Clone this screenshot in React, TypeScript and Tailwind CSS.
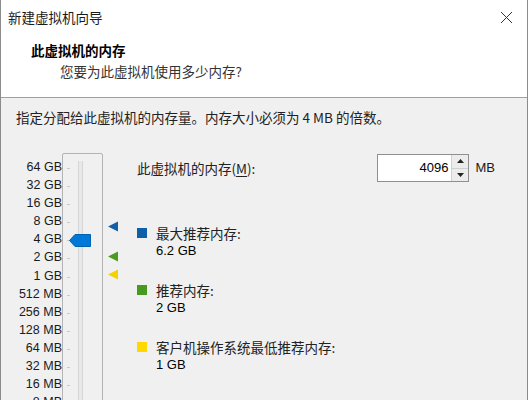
import React from "react";

const cjk = { fontFamily: '"Noto Sans CJK SC", "Liberation Sans", sans-serif' };
const latin = { fontFamily: '"Liberation Sans", "Noto Sans CJK SC", sans-serif' };

const scale = [
  "64 GB", "32 GB", "16 GB", "8 GB", "4 GB", "2 GB", "1 GB",
  "512 MB", "256 MB", "128 MB", "64 MB", "32 MB", "16 MB", "8 MB",
];

function Marker({ color }: { color: string }) {
  return (
    <svg width="11" height="11" viewBox="0 0 11 11">
      <polygon points="0,5.5 10,0.5 10,10.5" fill={color} />
    </svg>
  );
}

function Legend({ color, label, value }: { color: string; label: string; value: string }) {
  return (
    <div className="flex gap-[9px]">
      <div className={`mt-[4px] h-[10px] w-[10px] ${color}`} />
      <div className="flex flex-col">
        <span className="text-[13.5px] leading-[18px] text-[#222]" style={cjk}>{label}</span>
        <span className="text-[13px] leading-[18px] text-black" style={latin}>{value}</span>
      </div>
    </div>
  );
}

export default function App() {
  return (
    <div className="h-[400px] w-[529px] overflow-hidden bg-white">
      <div className="flex h-[400px] w-[528px] flex-col border-x border-[#8c8c8c]">
        {/* header */}
        <div className="h-[98px] shrink-0 border-b border-[#a0a0a0] bg-white">
          <div className="flex h-[34px] items-center justify-between pl-[7px] pr-[14px]">
            <span className="text-[13.5px] text-[#1a1a1a]" style={cjk}>新建虚拟机向导</span>
            <svg width="13" height="13" viewBox="0 0 13 13" className="mt-[1px]">
              <path d="M1 1L12 12M12 1L1 12" stroke="#333" strokeWidth="1" />
            </svg>
          </div>
          <div className="pl-[30px] pt-[6px] text-[13.5px] font-bold leading-[20px] text-black" style={cjk}>
            此虚拟机的内存
          </div>
          <div className="pl-[59px] pt-[1px] text-[13.5px] leading-[20px] text-[#333]" style={cjk}>
            您要为此虚拟机使用多少内存?
          </div>
        </div>

        {/* body */}
        <div className="flex-1 bg-[#f0f0f0]">
          <div className="pl-[15px] pt-[9px] text-[13.5px] leading-[20px] text-[#222]" style={cjk}>
            指定分配给此虚拟机的内存量。内存大小必须为 4 MB 的倍数。
          </div>

          <div className="mt-[26px] flex">
            {/* scale labels */}
            <div className="flex w-[61px] flex-col items-end pt-[5px]" style={latin}>
              {scale.map((s) => (
                <span key={s} className="h-[18.1px] text-[12.5px] leading-[18px] text-[#1a1a1a]">{s}</span>
              ))}
            </div>

            {/* slider */}
            <div className="relative h-[260px] w-[41px] rounded-[2px] border border-[#b4b4b4] bg-[#f0f0f0]">
              <div className="absolute left-[15px] top-[7px] h-[260px] w-[5px] border-x border-[#d6d6d6] bg-[#e8e8e8]" />
              <div className="flex flex-col pt-[13px]">
                {scale.map((s) => (
                  <div key={s} className="h-[18.1px] pl-[4px]">
                    <div className="mt-[1px] h-px w-[3px] bg-[#c8c8c8]" />
                  </div>
                ))}
              </div>
              <svg width="22" height="13" viewBox="0 0 22 13" className="absolute left-[6px] top-[80px]">
                <polygon points="0.5,6.5 6,0.5 21.5,0.5 21.5,12.5 6,12.5" fill="#0078d7" stroke="#0063b1" />
              </svg>
            </div>

            {/* markers */}
            <div className="relative w-[34px]">
              <div className="absolute left-[5px] top-[68px]"><Marker color="#1460a8" /></div>
              <div className="absolute left-[5px] top-[98px]"><Marker color="#4a9c21" /></div>
              <div className="absolute left-[5px] top-[116px]"><Marker color="#f2d200" /></div>
            </div>

            {/* right panel */}
            <div className="flex flex-1 flex-col">
              <div className="flex items-center pt-[1px]">
                <span className="text-[13.5px] text-[#222]" style={cjk}>
                  此虚拟机的内存(<span className="underline underline-offset-2">M</span>):
                </span>
                <div className="ml-[122px] flex h-[28px] w-[92px] border border-[#8f8f8f] bg-white">
                  <div className="flex flex-1 items-center justify-end pr-[3px] text-[13px] text-black" style={latin}>
                    4096
                  </div>
                  <div className="flex w-[17px] flex-col border-l border-[#d0d0d0]">
                    <div className="flex flex-1 items-center justify-center border-b border-[#d0d0d0] bg-[#ececec]">
                      <svg width="7" height="4" viewBox="0 0 7 4"><polygon points="3.5,0 7,4 0,4" fill="#222" /></svg>
                    </div>
                    <div className="flex flex-1 items-center justify-center bg-[#ececec]">
                      <svg width="7" height="4" viewBox="0 0 7 4"><polygon points="0,0 7,0 3.5,4" fill="#222" /></svg>
                    </div>
                  </div>
                </div>
                <span className="ml-[6px] text-[13px] text-[#1a1a1a]" style={latin}>MB</span>
              </div>

              <div className="mt-[42px] flex flex-col gap-[21px]">
                <Legend color="bg-[#0f5fa8]" label="最大推荐内存:" value="6.2 GB" />
                <Legend color="bg-[#459a1f]" label="推荐内存:" value="2 GB" />
                <Legend color="bg-[#ffd800]" label="客户机操作系统最低推荐内存:" value="1 GB" />
              </div>
            </div>
          </div>
        </div>
      </div>
    </div>
  );
}
